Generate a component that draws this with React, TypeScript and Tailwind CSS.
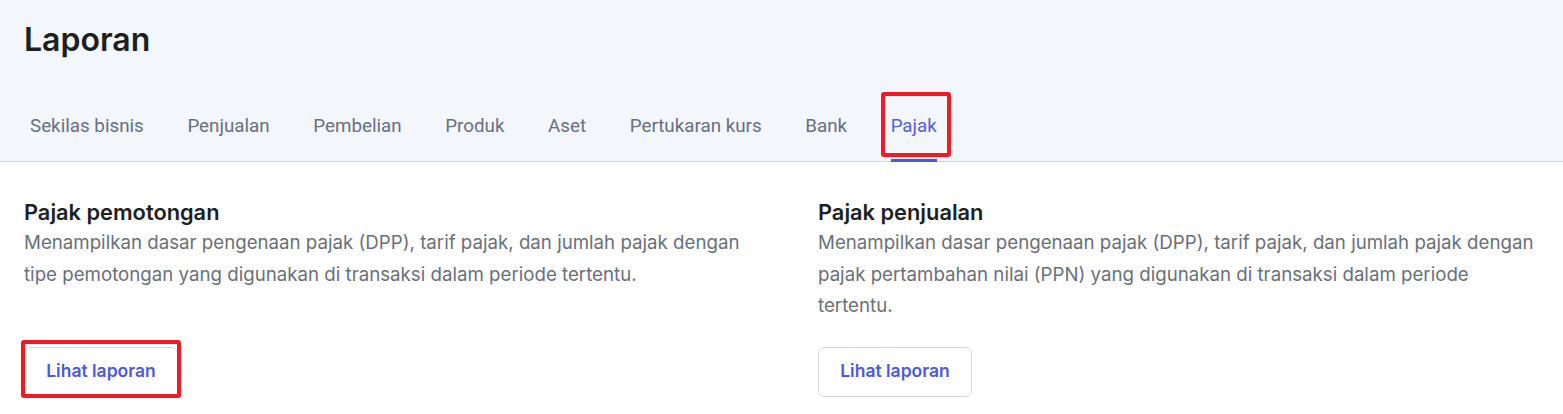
import type { ReactNode } from 'react'

const tabs = [
  'Sekilas bisnis',
  'Penjualan',
  'Pembelian',
  'Produk',
  'Aset',
  'Pertukaran kurs',
  'Bank',
  'Pajak',
]

const reports = [
  {
    title: 'Pajak pemotongan',
    desc: 'Menampilkan dasar pengenaan pajak (DPP), tarif pajak, dan jumlah pajak dengan tipe pemotongan yang digunakan di transaksi dalam periode tertentu.',
    marked: true,
  },
  {
    title: 'Pajak penjualan',
    desc: 'Menampilkan dasar pengenaan pajak (DPP), tarif pajak, dan jumlah pajak dengan pajak pertambahan nilai (PPN) yang digunakan di transaksi dalam periode tertentu.',
    marked: false,
  },
]

/** Red annotation box drawn over an element */
function Mark({ className, children }: { className: string; children: ReactNode }) {
  return (
    <span className="relative inline-flex">
      {children}
      <span className={`pointer-events-none absolute rounded-[3px] border-4 border-[#ec1c24] ${className}`} />
    </span>
  )
}

export default function App() {
  const active = 'Pajak'

  return (
    <div className="min-h-[414px] w-full bg-white font-['Inter',sans-serif]">
      <header className="border-b border-[#cdd6e1] bg-[#f3f6fb] px-6">
        <h1 className="pt-[20px] text-[32px] font-semibold leading-[40px] text-[#1d1f22]">Laporan</h1>
        <nav className="mt-[51px] flex gap-[43.6px] pl-1.5 font-['Roboto',sans-serif] text-[18.8px]">
          {tabs.map((t) => {
            const isActive = t === active
            const tab = (
              <button
                key={t}
                type="button"
                className={`relative pb-[22px] pt-[2px] leading-[26px] ${
                  isActive ? 'text-[#5661d9]' : 'text-[#687080]'
                }`}
              >
                {t}
                {isActive && (
                  <span className="absolute -bottom-px left-0 right-0 h-[3px] bg-[#4b58d6]" />
                )}
              </button>
            )
            return isActive ? (
              <Mark key={t} className="-left-[10px] -right-[14px] -top-[19px] bottom-[4px]">
                {tab}
              </Mark>
            ) : (
              tab
            )
          })}
        </nav>
      </header>

      <main className="grid grid-cols-[728px_728px] gap-[66px] px-6 pt-[36px]">
        {reports.map((r) => (
          <section key={r.title} className="flex flex-col">
            <h2 className="text-[21.8px] font-semibold leading-[28px] text-[#1d1f22]">{r.title}</h2>
            <p className="mt-[1px] text-[18.7px] leading-[31.5px] text-[#6b6f78]">{r.desc}</p>
            <div className="mt-auto pt-[25px]">
              {r.marked ? (
                <Mark className="-left-[3px] -right-[3px] -top-[7px] -bottom-[1px]">
                  <LihatButton />
                </Mark>
              ) : (
                <LihatButton />
              )}
            </div>
          </section>
        ))}
      </main>
    </div>
  )
}

function LihatButton() {
  return (
    <button
      type="button"
      className="h-[50px] w-[154px] rounded-md border border-[#d3d7de] bg-white text-[17.5px] font-semibold text-[#4c5ad6]"
    >
      Lihat laporan
    </button>
  )
}
